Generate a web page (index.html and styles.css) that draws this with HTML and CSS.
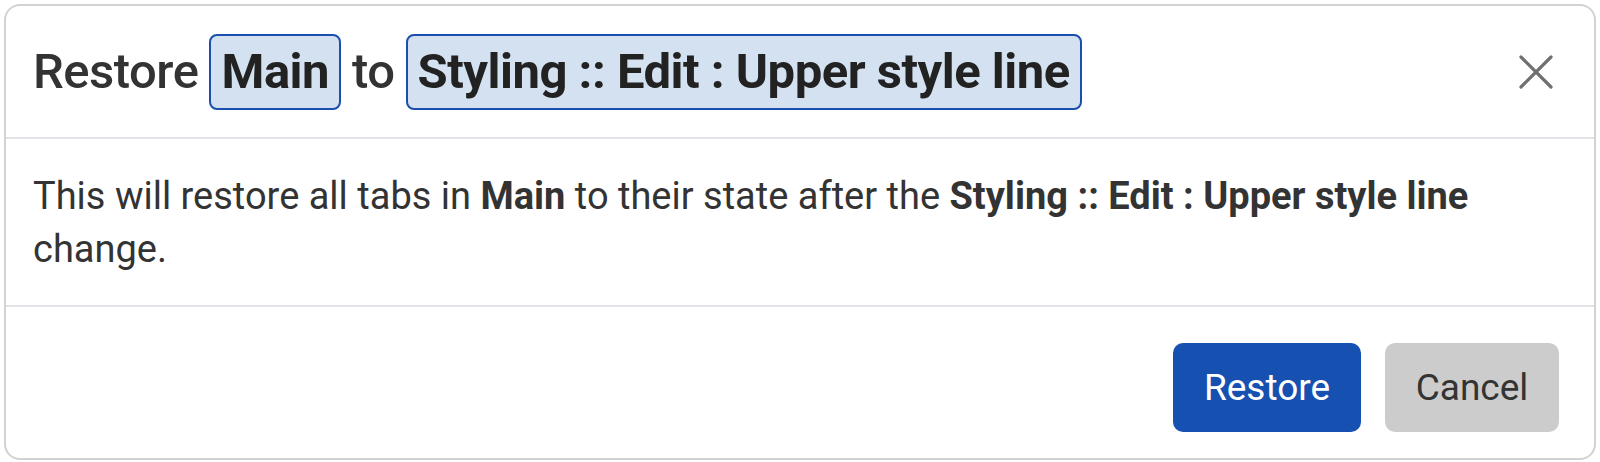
FILE: index.html
```html
<!DOCTYPE html>
<html lang="en">
<head>
<meta charset="utf-8">
<title>Restore</title>
<link rel="stylesheet" href="styles.css">
</head>
<body>
<div class="dialog">
  <div class="header">
    <div class="title">
      <span class="word">Restore</span>
      <span class="chip">Main</span>
      <span class="word">to</span>
      <span class="chip">Styling :: Edit : Upper style line</span>
    </div>
    <button class="close" aria-label="Close">
      <svg width="34" height="34" viewBox="0 0 34 34"><path d="M2 2 L32 32 M32 2 L2 32" stroke="#707070" stroke-width="3.2" stroke-linecap="round"/></svg>
    </button>
  </div>
  <div class="body">
    <p class="msg">This will restore all tabs in <b>Main</b> to their state after the <b>Styling :: Edit : Upper style line</b> change.</p>
  </div>
  <div class="footer">
    <button class="btn primary">Restore</button>
    <button class="btn secondary">Cancel</button>
  </div>
</div>
</body>
</html>
```
FILE: styles.css
```css
html, body {
  margin: 0;
  padding: 0;
  background: #ffffff;
}
body {
  font-family: Roboto, "Liberation Sans", sans-serif;
  color: #333333;
}
.dialog {
  margin: 4px;
  height: 456px;
  box-sizing: border-box;
  border: 2px solid #d2d2d2;
  border-radius: 16px;
  display: flex;
  flex-direction: column;
  overflow: hidden;
}
.header {
  display: flex;
  align-items: center;
  justify-content: space-between;
  height: 133px;
  flex: none;
  box-sizing: border-box;
  padding: 0 41px 0 27px;
  border-bottom: 2px solid #e1e4e9;
}
.title {
  display: flex;
  align-items: center;
  gap: 11px;
  font-size: 49px;
  font-weight: 500;
  letter-spacing: -0.5px;
  color: #333333;
}
.chip {
  display: flex;
  align-items: center;
  height: 76px;
  box-sizing: border-box;
  padding: 0 10px;
  background: #d3e1f0;
  border: 2px solid #1a4fae;
  border-radius: 8px;
  font-weight: 700;
  color: #222222;
}
.close {
  border: 0;
  background: transparent;
  padding: 0;
  width: 34px;
  height: 34px;
  display: flex;
  cursor: pointer;
}
.body {
  padding: 31px 26px 0 27px;
  height: 168px;
  flex: none;
  box-sizing: border-box;
  border-bottom: 2px solid #e1e4e9;
}
.msg {
  margin: 0;
  font-size: 38px;
  line-height: 53px;
  letter-spacing: 0;
  color: #333333;
}
.msg b {
  font-weight: 700;
}
.footer {
  flex: 1;
  display: flex;
  justify-content: flex-end;
  align-items: flex-start;
  gap: 24px;
  padding: 36px 35px 0 0;
}
.btn {
  height: 89px;
  border: 0;
  border-radius: 10px;
  font-family: Roboto, "Liberation Sans", sans-serif;
  font-size: 37px;
  font-weight: 400;
  cursor: pointer;
}
.primary {
  width: 188px;
  background: #1650b0;
  color: #ffffff;
}
.secondary {
  width: 174px;
  background: #cccccc;
  color: #333333;
}
```
